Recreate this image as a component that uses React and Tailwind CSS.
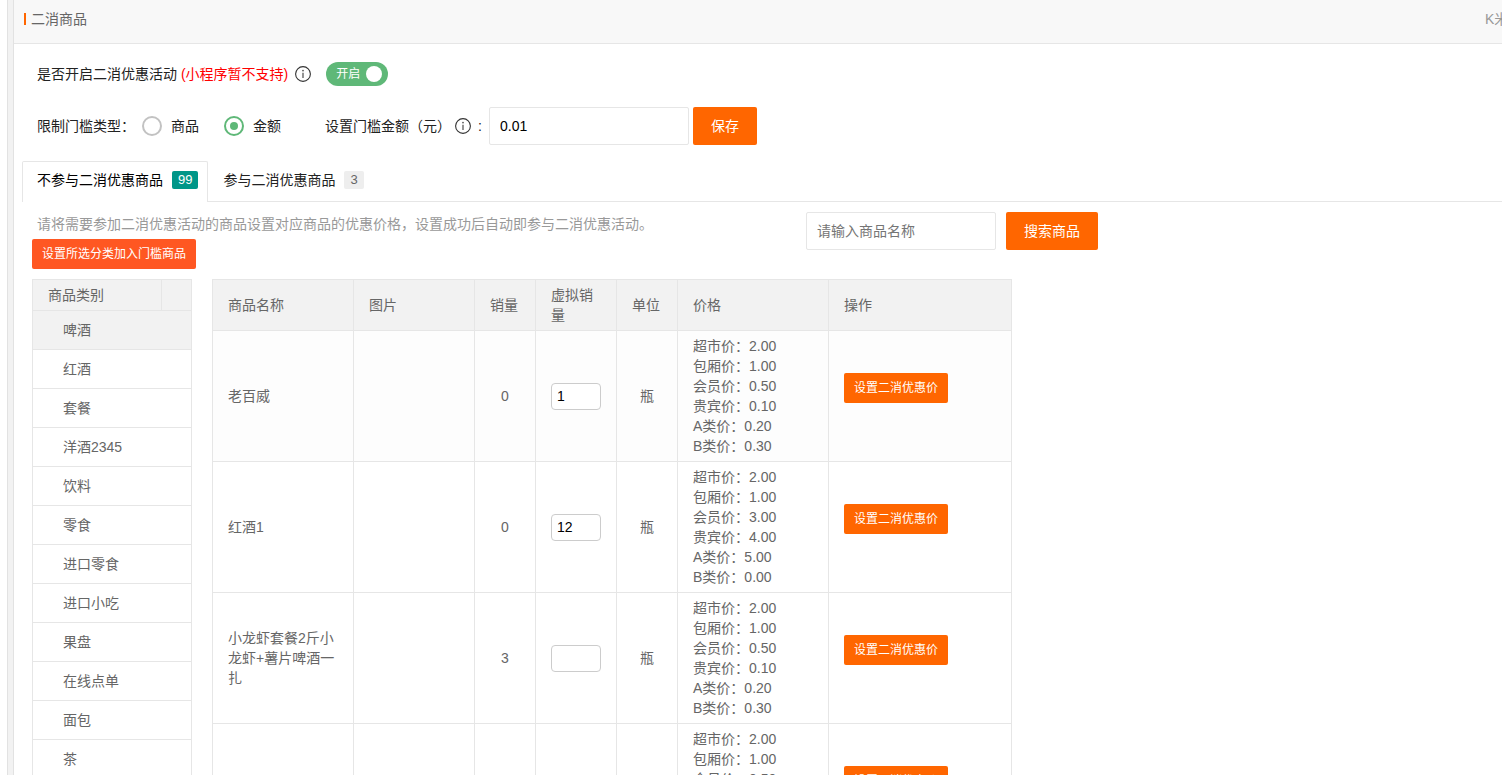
import { useState } from "react";

const categories = [
  "啤酒", "红酒", "套餐", "洋酒2345", "饮料", "零食", "进口零食",
  "进口小吃", "果盘", "在线点单", "面包", "茶",
];

const priceLabels = ["超市价", "包厢价", "会员价", "贵宾价", "A类价", "B类价"];

const products = [
  { id: 1, name: "老百威", sales: 0, virtual: "1", unit: "瓶", prices: ["2.00", "1.00", "0.50", "0.10", "0.20", "0.30"] },
  { id: 2, name: "红酒1", sales: 0, virtual: "12", unit: "瓶", prices: ["2.00", "1.00", "3.00", "4.00", "5.00", "0.00"] },
  { id: 3, name: "小龙虾套餐2斤小龙虾+薯片啤酒一扎", sales: 3, virtual: "", unit: "瓶", prices: ["2.00", "1.00", "0.50", "0.10", "0.20", "0.30"] },
  { id: 4, name: "啤酒", sales: 0, virtual: "", unit: "瓶", prices: ["2.00", "1.00", "0.50", "0.10", "0.20", "0.30"] },
];

function InfoIcon() {
  return (
    <svg className="size-4 shrink-0" viewBox="0 0 16 16" fill="none" aria-hidden="true">
      <circle cx="8" cy="8" r="7.4" stroke="#333" strokeWidth="1.1" />
      <circle cx="8" cy="4.6" r="0.9" fill="#555" />
      <path d="M8 6.7V12" stroke="#666" strokeWidth="1.4" />
    </svg>
  );
}

function Radio({ label, value, current, onChange }) {
  return (
    <label className="flex items-center gap-[9px]">
      <input
        type="radio"
        name="threshold"
        value={value}
        checked={current === value}
        onChange={() => onChange(value)}
        className="grid size-5 appearance-none place-content-center rounded-full border-2 border-[#c2c2c2] before:size-2 before:rounded-full checked:border-[#5fb878] checked:before:bg-[#5fb878]"
      />
      {label}
    </label>
  );
}

function Tab({ label, count, active, onClick }) {
  return (
    <button
      type="button"
      role="tab"
      aria-selected={active}
      onClick={onClick}
      className={
        active
          ? "-mb-px flex h-[41px] items-center gap-[9px] rounded-t-xs border border-b-0 border-[#e6e6e6] bg-white pr-[9px] pb-1 pl-3.5 text-black"
          : "flex h-10 items-center gap-[9px] px-[15px] pb-0.5 text-[#222]"
      }
    >
      {label}
      <span
        className={
          active
            ? "h-[18px] rounded-xs bg-[#009688] px-1.5 text-[13px] leading-[18px] text-white"
            : "h-[18px] rounded-xs bg-[#eee] px-1.5 text-[13px] leading-[18px] text-[#666]"
        }
      >
        {count}
      </span>
    </button>
  );
}

export default function App() {
  const [enabled, setEnabled] = useState(true);
  const [type, setType] = useState("amount");
  const [tab, setTab] = useState(0);
  const [category, setCategory] = useState(categories[0]);

  return (
    <div className="flex h-screen overflow-hidden bg-white pl-[7px] font-['Liberation_Sans','Noto_Sans_CJK_SC',sans-serif] text-sm text-[#222]">
      <div className="w-[7px] shrink-0 border-x border-[#e2e2e2] bg-[#f2f2f2]" />
      <div className="min-w-0 flex-1">
        <header className="flex h-11 items-start justify-between border-b border-[#e6e6e6] bg-[#f8f8f8] pt-2 pl-2.5 text-[#666]">
          <h1 className="flex items-center gap-[5px] leading-[22px]">
            <span className="h-3 w-0.5 bg-[#ff6600]" />
            二消商品
          </h1>
          <span className="w-[17px] overflow-hidden leading-[22px] whitespace-nowrap text-[#999]">K米</span>
        </header>

        <main className="pl-2">
          <div className="mt-[18px] flex h-6 items-center pl-[15px]">
            <span>
              是否开启二消优惠活动 <span className="text-[#f00]">(小程序暂不支持)</span>
            </span>
            <span className="ml-[7px]"><InfoIcon /></span>
            <label className="ml-[15px] flex">
              <input
                type="checkbox"
                role="switch"
                aria-label="开启二消优惠活动"
                checked={enabled}
                onChange={(e) => setEnabled(e.target.checked)}
                className="peer sr-only"
              />
              <span className="flex h-6 w-[62px] items-center justify-between rounded-full bg-[#c2c2c2] pr-1.5 pl-2.5 text-xs text-white peer-checked:bg-[#5fb878]">
                {enabled ? "开启" : "关闭"}
                <span className="size-4 rounded-full bg-white" />
              </span>
            </label>
          </div>

          <form className="mt-[21px] flex items-center pl-[15px]" onSubmit={(e) => e.preventDefault()}>
            <span>限制门槛类型：</span>
            <div className="ml-[7px] flex gap-[25px]">
              <Radio label="商品" value="goods" current={type} onChange={setType} />
              <Radio label="金额" value="amount" current={type} onChange={setType} />
            </div>
            <label htmlFor="amount" className="ml-11 flex items-center gap-1">
              设置门槛金额（元）
              <InfoIcon />
              <span className="w-2.5 text-center">:</span>
            </label>
            <input
              id="amount"
              defaultValue="0.01"
              className="ml-1 h-[38px] w-[200px] rounded-xs border border-[#e6e6e6] px-2.5 text-black outline-none"
            />
            <button type="submit" className="ml-1 h-[38px] rounded-xs bg-[#ff6600] px-[18px] text-white">
              保存
            </button>
          </form>

          <div role="tablist" className="mt-4 flex h-[41px] border-b border-[#e6e6e6]">
            <Tab label="不参与二消优惠商品" count={99} active={tab === 0} onClick={() => setTab(0)} />
            <Tab label="参与二消优惠商品" count={3} active={tab === 1} onClick={() => setTab(1)} />
          </div>

          <section className="pt-2.5 pl-2.5">
            <div className="flex items-start">
              <div className="w-[774px]">
                <p className="pb-0.5 pl-[5px] leading-[25px] text-[#999]">
                  请将需要参加二消优惠活动的商品设置对应商品的优惠价格，设置成功后自动即参与二消优惠活动。
                </p>
                <button type="button" className="h-[30px] rounded-xs bg-[#ff5722] px-2.5 text-xs text-white">
                  设置所选分类加入门槛商品
                </button>
              </div>
              <input
                aria-label="商品名称"
                placeholder="请输入商品名称"
                className="h-[38px] w-[190px] rounded-xs border border-[#e6e6e6] px-2.5 outline-none placeholder:text-[#757575]"
              />
              <button type="button" className="ml-2.5 h-[38px] rounded-xs bg-[#ff6600] px-[18px] text-white">
                搜索商品
              </button>
            </div>

            <div className="mt-2.5 flex items-start gap-5 text-[#666]">
              <table className="w-40 table-fixed border-collapse">
                <colgroup>
                  <col className="w-[129px]" />
                  <col />
                </colgroup>
                <thead>
                  <tr className="h-[31px] bg-[#f2f2f2]">
                    <th className="border border-[#e6e6e6] pl-[15px] text-left font-normal">商品类别</th>
                    <td className="border border-[#e6e6e6]" />
                  </tr>
                </thead>
                <tbody>
                  {categories.map((c) => (
                    <tr key={c} className={c === category ? "bg-[#f2f2f2]" : "bg-white"}>
                      <td colSpan={2} className="border border-[#e6e6e6] p-0">
                        <button
                          type="button"
                          onClick={() => setCategory(c)}
                          className="block h-[38px] w-full pl-[30px] text-left"
                        >
                          {c}
                        </button>
                      </td>
                    </tr>
                  ))}
                </tbody>
              </table>

              <table className="w-[800px] table-fixed border-collapse leading-5 [&_td]:border [&_td]:border-[#e6e6e6] [&_td]:px-[15px] [&_td]:py-[5px] [&_th]:border [&_th]:border-[#e6e6e6] [&_th]:px-[15px] [&_th]:text-left [&_th]:font-normal">
                <colgroup>
                  <col className="w-[141px]" />
                  <col className="w-[121px]" />
                  <col className="w-[61px]" />
                  <col className="w-[81px]" />
                  <col className="w-[61px]" />
                  <col className="w-[151px]" />
                  <col />
                </colgroup>
                <thead>
                  <tr className="h-[51px] bg-[#f2f2f2]">
                    <th>商品名称</th>
                    <th>图片</th>
                    <th>销量</th>
                    <th>虚拟销量</th>
                    <th>单位</th>
                    <th>价格</th>
                    <th>操作</th>
                  </tr>
                </thead>
                <tbody>
                  {products.map((p) => (
                    <tr key={p.id} className="first:bg-[#fdfdfd]">
                      <td>{p.name}</td>
                      <td />
                      <td className="text-center">{p.sales}</td>
                      <td>
                        <input
                          aria-label={`${p.name} 虚拟销量`}
                          defaultValue={p.virtual}
                          className="block h-[27px] w-[50px] rounded border border-[#ccc] bg-white px-[5px] text-black outline-none"
                        />
                      </td>
                      <td className="text-center">{p.unit}</td>
                      <td>
                        {p.prices.map((v, i) => (
                          <div key={priceLabels[i]}>{priceLabels[i]}：{v}</div>
                        ))}
                      </td>
                      <td>
                        <div className="flex pb-4">
                          <button type="button" className="h-[30px] rounded-xs bg-[#ff6600] px-2.5 text-xs text-white">
                            设置二消优惠价
                          </button>
                        </div>
                      </td>
                    </tr>
                  ))}
                </tbody>
              </table>
            </div>
          </section>
        </main>
      </div>
    </div>
  );
}
